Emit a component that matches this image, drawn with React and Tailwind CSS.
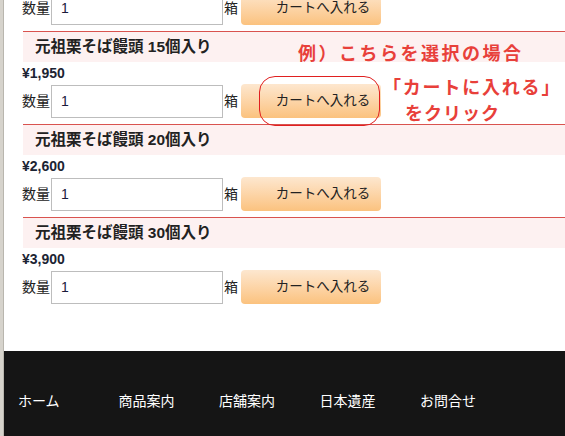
const FONT = { fontFamily: '"Liberation Sans", "Noto Sans CJK JP", sans-serif' };

const items = [
  { name: "元祖栗そば饅頭 15個入り", price: "¥1,950" },
  { name: "元祖栗そば饅頭 20個入り", price: "¥2,600" },
  { name: "元祖栗そば饅頭 30個入り", price: "¥3,900" },
];

const nav = ["ホーム", "商品案内", "店舗案内", "日本遺産", "お問合せ"];

function QtyRow() {
  return (
    <div className="flex items-center h-[34px]">
      <span className="text-[14px] text-[#222] w-[29px]">数量</span>
      <input
        defaultValue="1"
        className="w-[172px] h-[33px] border border-[#bdbdbd] bg-white px-[9px] text-[14px] text-[#1a1a3a] outline-none"
      />
      <span className="text-[14px] text-[#222] w-[18px] pl-[1px]">箱</span>
      <button className="w-[140px] h-[34px] rounded-[4px] bg-gradient-to-b from-[#fde7cf] to-[#fbc27e] pl-[24px] text-[13.5px] text-[#222]">
        カートへ入れる
      </button>
    </div>
  );
}

const NOTE = { fontFamily: '"Noto Sans CJK JP", serif' };

export default function App() {
  return (
    <div className="relative w-[565px] h-[436px] overflow-hidden bg-white flex" style={FONT}>
      <div className="w-[4px] shrink-0 bg-[#d6d3cc] border-r border-[#b9b6ae]" />

      <div className="flex-1 flex flex-col">
        <div className="pl-[18px] mt-[-9px]">
          <QtyRow />
        </div>
        <div className="pl-[18px] mt-[6px]">
          {items.map((it) => (
            <div key={it.name} className="mb-[6px]">
              <div className="ml-[1px] border-t border-[#d9534f] h-[31px] bg-[#fdf1f1] flex items-center pl-[12px] pb-[1px] text-[15.5px] font-bold text-[#222]">
                {it.name}
              </div>
              <div className="h-[22px] flex items-center text-[14px] font-bold text-[#1c2433]">{it.price}</div>
              <QtyRow />
            </div>
          ))}
        </div>

        <div className="mt-auto h-[85px] bg-[#151515] flex items-center pl-[14px] pt-[16px]">
          {nav.map((n) => (
            <span key={n} className="w-[100.5px] text-[14px] text-white">{n}</span>
          ))}
        </div>
      </div>

      {/* annotation overlay */}
      <div className="absolute left-[259px] top-[76px] w-[121px] h-[50px] rounded-[16px] border border-[#e02020]" />
      <div className="absolute left-[298px] top-[39px] text-[18px] font-bold text-[#e8403a] tracking-[2.5px] whitespace-nowrap" style={NOTE}>
        例）こちらを選択の場合
      </div>
      <div className="absolute left-[383px] top-[73px] text-[18px] font-bold text-[#e8403a] tracking-[1.8px] whitespace-nowrap" style={NOTE}>
        「カートに入れる」
      </div>
      <div className="absolute left-[405px] top-[99px] text-[18px] font-bold text-[#e8403a] tracking-[1px] whitespace-nowrap" style={NOTE}>
        をクリック
      </div>
    </div>
  );
}
